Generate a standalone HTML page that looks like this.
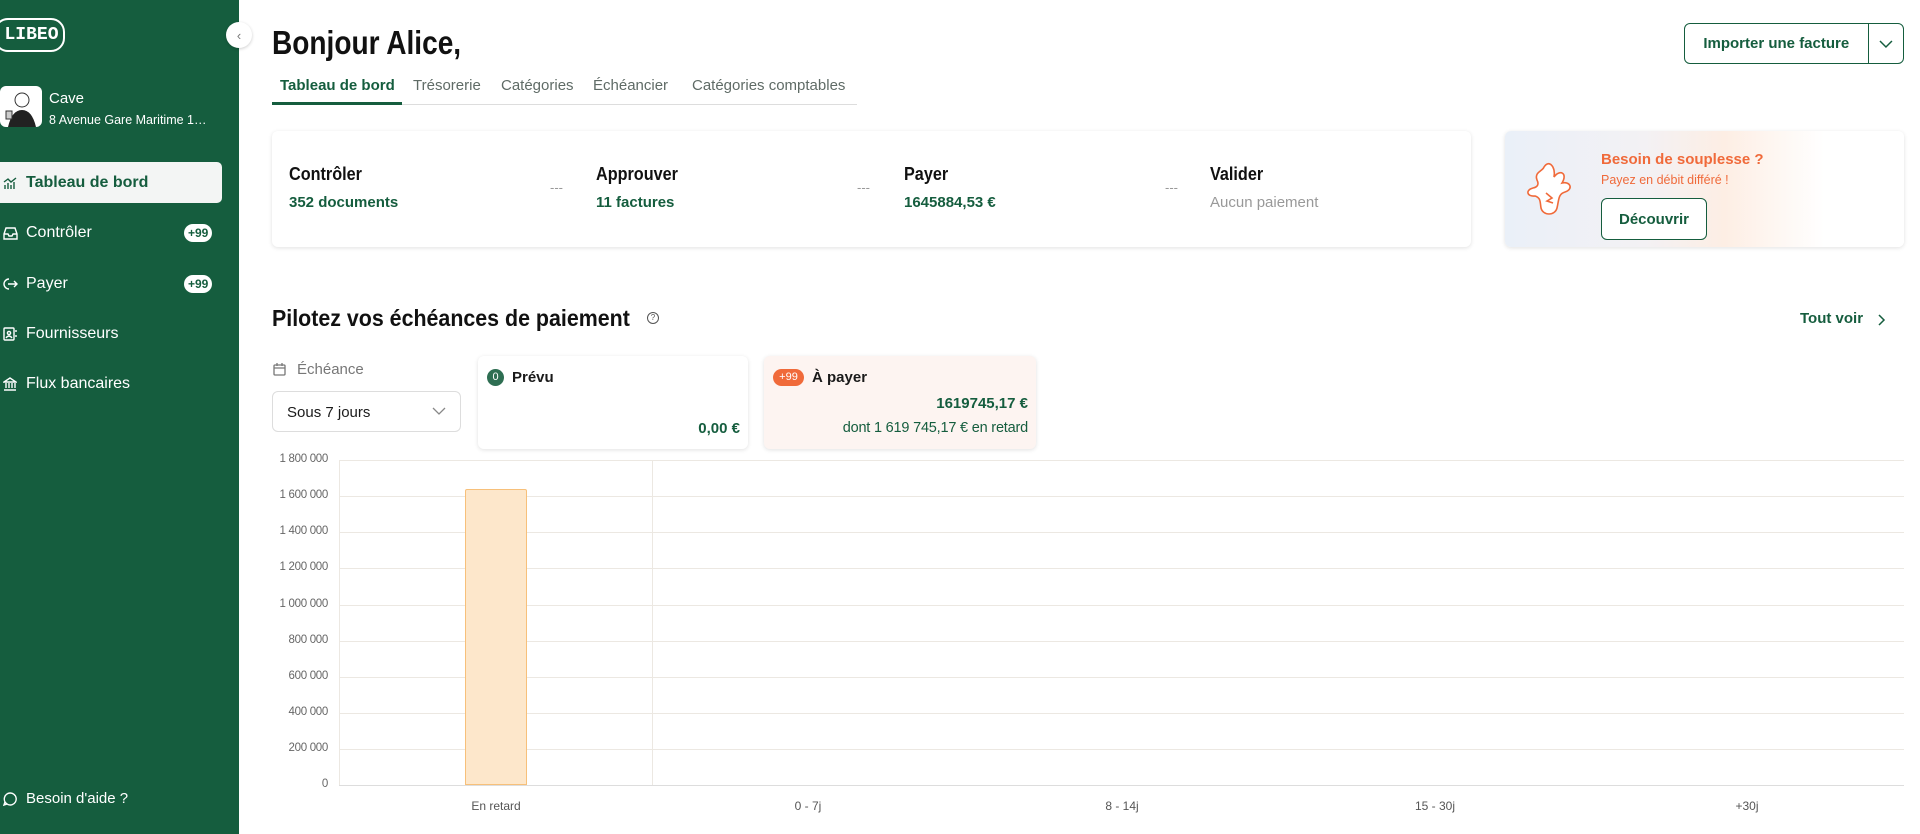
<!DOCTYPE html>
<html><head><meta charset="utf-8"><style>
*{box-sizing:border-box;margin:0;padding:0}
body{width:1920px;height:834px;overflow:hidden;background:#fff;font-family:"Liberation Sans",sans-serif;color:#1a1a1a;position:relative}
.abs{position:absolute}
.sb{left:0;top:0;width:239px;height:834px;background:#155d3e;color:#fff}
.nav{position:absolute;left:0;width:222px;height:41px;display:flex;align-items:center;font-size:16px;color:#fff}
.nav .ic{width:16px;margin-left:3px;margin-right:7px;display:flex}
.badge{position:absolute;left:184px;background:#fff;color:#155d3e;font-weight:bold;font-size:12px;border-radius:9px;padding:2px 4px}
.tab{position:absolute;top:77px;font-size:15px;color:#5f6b66}
.card{background:#fff;border-radius:6px;box-shadow:0 1px 4px rgba(0,0,0,.12)}
.st{position:absolute;top:164px}
.st b{display:block;font-size:18px;font-weight:bold;color:#111;transform:scaleX(.9);transform-origin:left}
.st span{display:block;margin-top:9px;font-size:15px;font-weight:bold;color:#155d3e}
.dash{position:absolute;top:180px;color:#999;font-size:13px}
.yl{position:absolute;left:268px;width:60px;text-align:right;font-size:11.5px;color:#666;white-space:nowrap;letter-spacing:-.3px}
.gl{position:absolute;left:339px;width:1565px;height:1px;background:#ece8e2}
.xl{position:absolute;top:799px;font-size:12px;color:#555;width:120px;text-align:center}
</style></head><body>
<div class="abs sb">
  <div class="abs" style="left:-6px;top:18px;width:71px;height:34px;border:2.5px solid #fff;border-radius:14px;font-family:'Liberation Mono',monospace;font-weight:bold;font-size:18px;display:flex;align-items:center;justify-content:center;padding-left:4px">LIBEO</div>
  <div class="abs" style="left:0;top:86px;width:42px;height:41px;background:#fff;border-radius:6px;overflow:hidden"><svg width="42" height="41"><circle cx="22" cy="14" r="7" fill="none" stroke="#333"/><path d="M8 41 Q12 24 22 24 Q32 24 36 41Z" fill="#222"/><rect x="6" y="25" width="6" height="8" fill="#ccc" stroke="#333"/></svg></div>
  <div class="abs" style="left:49px;top:90px;font-size:15px">Cave</div>
  <div class="abs" style="left:49px;top:113px;font-size:12.5px">8 Avenue Gare Maritime 1…</div>
  <div class="nav" style="top:162px;background:#f3f5f4;border-radius:0 5px 5px 0;color:#155d3e;font-weight:bold"><span class="ic"><svg width="14" height="14" viewBox="0 0 14 14" fill="none" stroke="#155d3e" stroke-width="1.4"><path d="M1 6l4-3 3 3 5-4M2 13V9M5 13V7M8 13V9M11 13V6"/></svg></span>Tableau de bord</div>
  <div class="nav" style="top:212px"><span class="ic"><svg width="15" height="14" viewBox="0 0 15 14" fill="none" stroke="#fff" stroke-width="1.4"><path d="M3 2h9l2 6v5H1V8zM1 8h4l1 2h3l1-2h4"/></svg></span>Contrôler<span class="badge" style="top:12px">+99</span></div>
  <div class="nav" style="top:263px"><span class="ic"><svg width="15" height="14" viewBox="0 0 15 14" fill="none" stroke="#fff" stroke-width="1.4"><path d="M6 2A5 5 0 1 0 6 12M5 7h9M11 4l3 3-3 3"/></svg></span>Payer<span class="badge" style="top:12px">+99</span></div>
  <div class="nav" style="top:313px"><span class="ic"><svg width="14" height="14" viewBox="0 0 14 14" fill="none" stroke="#fff" stroke-width="1.4"><rect x="1" y="1" width="10" height="12" rx="1"/><circle cx="6" cy="6" r="1.6"/><path d="M3 11q3-4 6 0M13 3v2M13 8v2"/></svg></span>Fournisseurs</div>
  <div class="nav" style="top:363px"><span class="ic"><svg width="14" height="14" viewBox="0 0 14 14" fill="none" stroke="#fff" stroke-width="1.4"><path d="M1 5l6-4 6 4zM3 6v5M6 6v5M9 6v5M12 6v5M1 13h12"/></svg></span>Flux bancaires</div>
  <div class="nav" style="top:778px;font-size:15px"><span class="ic"><svg width="14" height="14" viewBox="0 0 14 14" fill="none" stroke="#fff" stroke-width="1.4"><path d="M7 1a6 6 0 1 1-5 9L1 13l3-1A6 6 0 0 1 7 1z"/></svg></span>Besoin d'aide ?</div>
</div>
<div class="abs" style="left:226px;top:22px;width:26px;height:26px;border-radius:50%;background:#fff;box-shadow:0 1px 3px rgba(0,0,0,.2);color:#777;font-size:13px;display:flex;align-items:center;justify-content:center">‹</div>

<div class="abs" style="left:272px;top:24px;font-size:33px;font-weight:bold;color:#111;transform:scaleX(.85);transform-origin:left;white-space:nowrap">Bonjour Alice,</div>
<div class="abs" style="left:272px;top:104px;width:585px;height:1px;background:#ddd"></div>
<div class="abs" style="left:272px;top:102px;width:130px;height:3px;background:#155d3e"></div>
<div class="tab" style="left:280px;color:#155d3e;font-weight:bold">Tableau de bord</div>
<div class="tab" style="left:413px">Trésorerie</div>
<div class="tab" style="left:501px">Catégories</div>
<div class="tab" style="left:593px">Échéancier</div>
<div class="tab" style="left:692px">Catégories comptables</div>

<div class="abs" style="left:1684px;top:23px;width:220px;height:41px;border:1.5px solid #155d3e;border-radius:6px;display:flex;align-items:center">
  <div style="width:183px;text-align:center;font-weight:bold;font-size:15px;color:#155d3e">Importer une facture</div>
  <div style="width:1.5px;height:39px;background:#155d3e"></div>
  <svg width="34" height="14" viewBox="0 0 34 14"><path d="M11 4l6 6 6-6" fill="none" stroke="#155d3e" stroke-width="1.5"/></svg>
</div>

<div class="abs card" style="left:272px;top:131px;width:1199px;height:116px"></div>
<div class="st" style="left:289px"><b>Contrôler</b><span>352 documents</span></div>
<div class="st" style="left:596px"><b>Approuver</b><span>11 factures</span></div>
<div class="st" style="left:904px"><b>Payer</b><span>1645884,53 €</span></div>
<div class="st" style="left:1210px"><b>Valider</b><span style="color:#999;font-weight:normal">Aucun paiement</span></div>
<div class="dash" style="left:550px">---</div><div class="dash" style="left:857px">---</div><div class="dash" style="left:1165px">---</div>

<div class="abs card" style="left:1505px;top:131px;width:399px;height:116px;background:linear-gradient(90deg,#eaf0f8 0%,#f3f1f4 35%,#fdeee4 55%,#fff 80%)">
  <svg class="abs" style="left:14px;top:24px" width="70" height="70" viewBox="0 0 70 70" fill="#fff" stroke="#f06a3a" stroke-width="1.6"><path d="M25 12c5-8 12 0 10 10 6-8 14-4 8 6 8-2 12 6 3 9-7 2-6 8-8 16-2 8-14 8-16 0-1-6 0-10-6-12-8 1-10-6-2-8 5-1 6-4 4-8-3-8 6-9 7-13z"/><path d="M27 38l6 5-5 3 6 2" fill="none"/></svg>
  <div class="abs" style="left:96px;top:20px;color:#f06a3a;font-weight:bold;font-size:15px">Besoin de souplesse ?</div>
  <div class="abs" style="left:96px;top:42px;color:#f06a3a;font-size:12.5px">Payez en débit différé !</div>
  <div class="abs" style="left:96px;top:67px;width:106px;height:42px;border:1.5px solid #155d3e;border-radius:6px;background:#fff;color:#155d3e;font-weight:bold;font-size:15px;display:flex;align-items:center;justify-content:center">Découvrir</div>
</div>

<div class="abs" style="left:272px;top:305px;font-size:23px;font-weight:bold;color:#111;transform:scaleX(.93);transform-origin:left;white-space:nowrap">Pilotez vos échéances de paiement</div>
<div class="abs" style="left:647px;top:312px;width:12px;height:12px;border:1px solid #555;border-radius:50%;font-size:8px;text-align:center;line-height:10px;color:#555">?</div>
<div class="abs" style="left:1800px;top:310px;font-weight:bold;font-size:15px;color:#155d3e">Tout voir</div>
<svg class="abs" style="left:1876px;top:313px" width="10" height="14"><path d="M3 2l5 5-5 5" fill="none" stroke="#155d3e" stroke-width="1.5"/></svg>

<svg class="abs" style="left:273px;top:362px" width="13" height="14"><rect x="1" y="3" width="11" height="10" rx="1" fill="none" stroke="#777" stroke-width="1.3"/><path d="M1 6h11M4 1v3M9 1v3" stroke="#777" stroke-width="1.3"/></svg>
<div class="abs" style="left:297px;top:361px;font-size:15px;color:#777">Échéance</div>
<div class="abs" style="left:272px;top:391px;width:189px;height:41px;border:1px solid #ddd;border-radius:6px;font-size:15px;padding:12px 0 0 14px">Sous 7 jours</div>
<svg class="abs" style="left:432px;top:406px" width="14" height="10"><path d="M1 2l6 6 6-6" fill="none" stroke="#888" stroke-width="1.3"/></svg>

<div class="abs card" style="left:478px;top:356px;width:270px;height:93px">
  <div class="abs" style="left:9px;top:13px;width:17px;height:17px;border-radius:50%;background:#2e6e52;color:#fff;font-size:11px;text-align:center;line-height:17px">0</div>
  <div class="abs" style="left:34px;top:13px;font-weight:bold;font-size:15px">Prévu</div>
  <div class="abs" style="right:8px;top:64px;font-weight:bold;font-size:15px;color:#155d3e">0,00 €</div>
</div>
<div class="abs card" style="left:764px;top:356px;width:272px;height:93px;background:#fdf4f1">
  <div class="abs" style="left:9px;top:13px;width:31px;height:17px;border-radius:9px;background:#f06a3a;color:#fff;font-size:11px;text-align:center;line-height:17px">+99</div>
  <div class="abs" style="left:48px;top:13px;font-weight:bold;font-size:15px">À payer</div>
  <div class="abs" style="right:8px;top:39px;font-weight:bold;font-size:15px;color:#155d3e">1619745,17 €</div>
  <div class="abs" style="right:8px;top:64px;font-size:14.5px;color:#155d3e;white-space:nowrap;letter-spacing:-.2px">dont 1 619 745,17 € en retard</div>
</div>

<div class="gl" style="top:460px"></div><div class="gl" style="top:496px"></div><div class="gl" style="top:532px"></div><div class="gl" style="top:568px"></div><div class="gl" style="top:605px"></div><div class="gl" style="top:641px"></div><div class="gl" style="top:677px"></div><div class="gl" style="top:713px"></div><div class="gl" style="top:749px"></div><div class="gl" style="top:785px;background:#ddd"></div>
<div class="yl" style="top:453px">1 800 000</div><div class="yl" style="top:489px">1 600 000</div><div class="yl" style="top:525px">1 400 000</div><div class="yl" style="top:561px">1 200 000</div><div class="yl" style="top:598px">1 000 000</div><div class="yl" style="top:634px">800 000</div><div class="yl" style="top:670px">600 000</div><div class="yl" style="top:706px">400 000</div><div class="yl" style="top:742px">200 000</div><div class="yl" style="top:778px">0</div>
<div class="abs" style="left:339px;top:460px;width:1px;height:325px;background:#ece8e2"></div>
<div class="abs" style="left:652px;top:460px;width:1px;height:325px;background:#ece8e2"></div>
<div class="abs" style="left:465px;top:489px;width:62px;height:296px;background:#fde7cb;border:1px solid #f7c07a;border-radius:2px 2px 0 0"></div>
<div class="xl" style="left:436px">En retard</div><div class="xl" style="left:748px">0 - 7j</div><div class="xl" style="left:1062px">8 - 14j</div><div class="xl" style="left:1375px">15 - 30j</div><div class="xl" style="left:1687px">+30j</div>
</body></html>
